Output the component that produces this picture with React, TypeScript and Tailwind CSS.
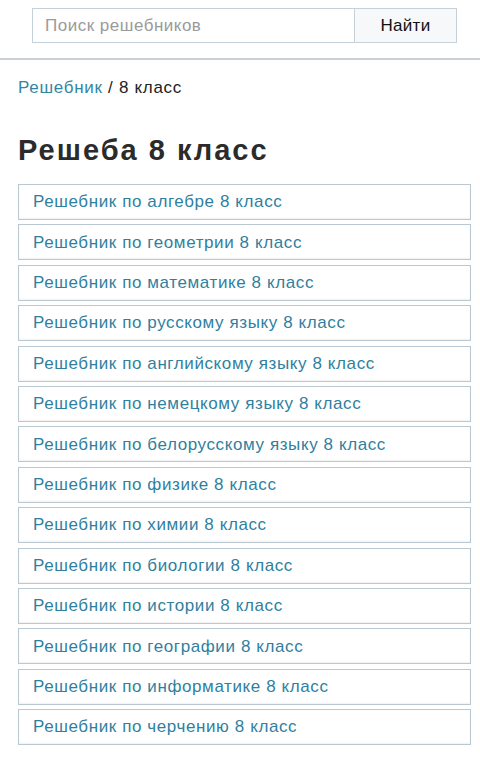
const subjects = [
  "алгебре",
  "геометрии",
  "математике",
  "русскому языку",
  "английскому языку",
  "немецкому языку",
  "белорусскому языку",
  "физике",
  "химии",
  "биологии",
  "истории",
  "географии",
  "информатике",
  "черчению",
];

export default function App() {
  return (
    <div className="min-h-[768px] bg-white font-['Liberation_Sans',Arial,sans-serif]">
      {/* Search */}
      <div className="pt-[8px] pb-[15px] border-b-2 border-[#c9cfd3]">
        <form className="flex ml-[32px] w-[425px] h-[35px]">
          <input
            type="text"
            placeholder="Поиск решебников"
            className="flex-1 min-w-0 h-full border border-[#c5d0d8] px-[12px] text-[17px] tracking-[0.5px] text-[#333] placeholder:text-[#9a9a9a] outline-none"
          />
          <button
            type="button"
            className="w-[102px] h-full border border-l-0 border-[#c5d0d8] bg-[#f7f8f9] text-[17px] tracking-[0.3px] text-[#111]"
          >
            Найти
          </button>
        </form>
      </div>

      {/* Breadcrumbs */}
      <div className="px-[18px] pt-[18px] text-[17px] leading-[20px] tracking-[0.7px] text-[#222]">
        <a href="#" className="text-[#3286a3]">
          Решебник
        </a>{" "}
        / 8 класс
      </div>

      <h1 className="px-[18px] mt-[36px] text-[29px] leading-[32px] font-bold tracking-[2px] text-[#2b2b2b]">
        Решеба 8 класс
      </h1>

      <ul className="ml-[18px] mr-[9px] mt-[18px] flex flex-col gap-[4.4px]">
        {subjects.map((s) => (
          <li key={s}>
            <a
              href="#"
              className="flex items-center h-[36px] px-[14px] border border-[#bac8d2] text-[17px] tracking-[0.6px] text-[#2f7fa0] shadow-[inset_0_-1px_2px_rgba(0,0,0,0.06)]"
            >
              Решебник по {s} 8 класс
            </a>
          </li>
        ))}
      </ul>
    </div>
  );
}
